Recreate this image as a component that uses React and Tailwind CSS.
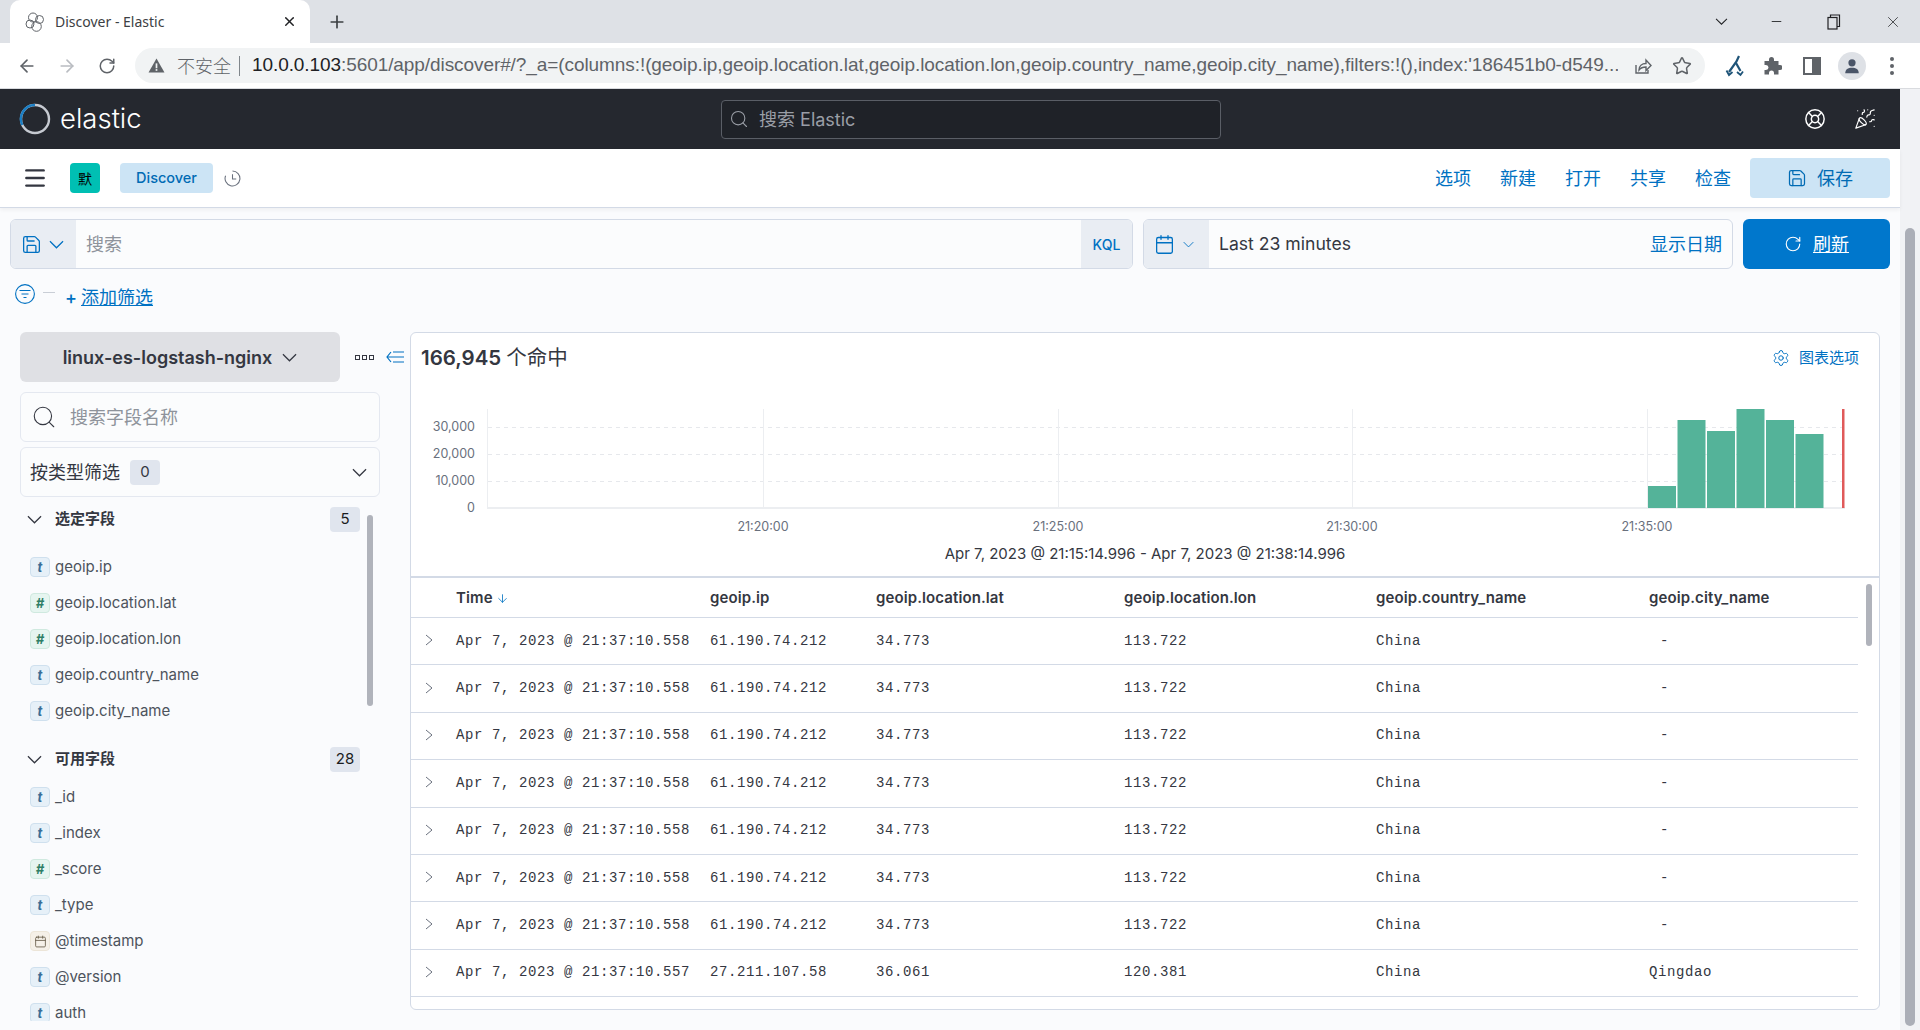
import { ArrowDown, ArrowLeft, ArrowRight, Calendar, LifeBuoy, Menu, Minus, PartyPopper, Plus, RotateCw, Save, Search, Settings, Star, X } from 'lucide-react';

const timeCol = 'Apr 7, 2023 @ 21:37:10.558';
const rows = [
  { time: timeCol, ip: '61.190.74.212', lat: '34.773', lon: '113.722', country: 'China', city: '-' },
  { time: timeCol, ip: '61.190.74.212', lat: '34.773', lon: '113.722', country: 'China', city: '-' },
  { time: timeCol, ip: '61.190.74.212', lat: '34.773', lon: '113.722', country: 'China', city: '-' },
  { time: timeCol, ip: '61.190.74.212', lat: '34.773', lon: '113.722', country: 'China', city: '-' },
  { time: timeCol, ip: '61.190.74.212', lat: '34.773', lon: '113.722', country: 'China', city: '-' },
  { time: timeCol, ip: '61.190.74.212', lat: '34.773', lon: '113.722', country: 'China', city: '-' },
  { time: timeCol, ip: '61.190.74.212', lat: '34.773', lon: '113.722', country: 'China', city: '-' },
  { time: 'Apr 7, 2023 @ 21:37:10.557', ip: '27.211.107.58', lat: '36.061', lon: '120.381', country: 'China', city: 'Qingdao' },
];

const selectedFields = [
  ['t', 'geoip.ip'],
  ['#', 'geoip.location.lat'],
  ['#', 'geoip.location.lon'],
  ['t', 'geoip.country_name'],
  ['t', 'geoip.city_name'],
];

const availableFields = [
  ['t', '_id'],
  ['t', '_index'],
  ['#', '_score'],
  ['t', '_type'],
  ['d', '@timestamp'],
  ['t', '@version'],
  ['t', 'auth'],
];

const bars = [
  { x: 1648, y: 486, w: 28 },
  { x: 1677.5, y: 420, w: 28 },
  { x: 1707, y: 431, w: 28 },
  { x: 1736.5, y: 409, w: 28 },
  { x: 1766, y: 420, w: 28 },
  { x: 1795.5, y: 434, w: 28 },
];

// thin EUI style chevron, wider than the lucide one
const Chev = ({ className }) => (
  <svg viewBox="0 0 16 9" className={className} fill="none" stroke="currentColor" strokeWidth="1.3">
    <path d="M1 1 8 8 15 1" />
  </svg>
);

const FieldIcon = ({ type }) => {
  if (type === 'd') {
    return (
      <span className="w-5 h-5 shrink-0 rounded-[4px] bg-[#f5f0e8] border border-[#ece5d8] flex items-center justify-center text-[#6b5f4d]">
        <Calendar size={13} strokeWidth={1.6} />
      </span>
    );
  }
  if (type === '#') {
    return (
      <span className="w-5 h-5 shrink-0 rounded-[4px] bg-[#e6f5f0] border border-[#cfe9df] flex items-center justify-center text-[#2f7f66] text-[13px] font-bold italic leading-none">#</span>
    );
  }
  return (
    <span className="w-5 h-5 shrink-0 rounded-[4px] bg-[#e6f0f8] border border-[#cfe0ee] flex items-center justify-center text-[#3a6e97] text-[13px] font-bold italic leading-none">t</span>
  );
};

const FieldRow = ({ type, name }) => (
  <div className="h-9 flex items-center gap-[5px] pl-[10px] shrink-0">
    <FieldIcon type={type} />
    <span className="text-[15px] text-[#4d535c]">{name}</span>
  </div>
);

const SectionHead = ({ title, count }) => (
  <div className="h-[26px] flex items-center pl-[7px] w-[340px] shrink-0">
    <Chev className="w-[15px] h-[9px] text-[#343741]" />
    <span className="ml-[13px] text-[15px] font-semibold text-[#343741] flex-1">{title}</span>
    <span className="w-[30px] h-[25px] rounded-[4px] bg-[#e0e5ee] flex items-center justify-center text-[15px] text-[#1a1c21]">{count}</span>
  </div>
);

const TabStrip = () => (
  <div className="h-[43px] bg-[#dee1e6] flex items-end shrink-0">
    <div className="ml-[10px] w-[300px] h-[43px] bg-white rounded-t-[10px] flex items-center pl-[15px] pr-[13px]">
      <svg viewBox="0 0 20 20" className="w-5 h-5 shrink-0" fill="none" stroke="#5f6368" strokeWidth="1">
        <circle cx="8" cy="5.5" r="4.5" />
        <circle cx="14.5" cy="7.5" r="4" />
        <circle cx="5" cy="12" r="4" />
        <circle cx="11.5" cy="14.5" r="4.8" />
      </svg>
      <span className="ml-[10px] flex-1 font-['Noto_Sans'] text-[14px] text-[#3c4043]">Discover - Elastic</span>
      <X size={15} strokeWidth={2.4} className="text-[#202124]" />
    </div>
    <div className="h-[43px] w-[54px] flex items-center justify-center">
      <Plus size={20} strokeWidth={2} className="text-[#3c4043]" />
    </div>
    <div className="flex-1" />
    <div className="h-[43px] flex items-center text-[#202124]">
      <Chev className="w-[13px] h-[7px]" />
      <Minus size={15} strokeWidth={1.4} className="ml-[41px]" />
      <svg viewBox="0 0 14 16" className="w-[14px] h-[16px] ml-[43px]" fill="none" stroke="currentColor" strokeWidth="1.2">
        <rect x="1" y="3.5" width="9" height="11.5" />
        <path d="M3.5 3.5V1H12.5V12.5H10" />
      </svg>
      <X size={18} strokeWidth={1} className="ml-[43px] mr-[18px]" />
    </div>
  </div>
);

const Toolbar = () => (
  <div className="h-[46px] bg-white border-b border-[#d9dbdf] flex items-center shrink-0">
    <div className="w-[135px] flex items-center pl-[17px] text-[#5f6368]">
      <ArrowLeft size={20} strokeWidth={2} />
      <ArrowRight size={20} strokeWidth={2} className="ml-[20px] text-[#b9bcc1]" />
      <RotateCw size={18} strokeWidth={2} className="ml-[21px]" />
    </div>
    <div className="w-[1570px] h-[35px] rounded-full bg-[#f1f3f4] flex items-center pl-[13px]">
      <svg viewBox="0 0 16 16" className="w-[17px] h-[17px] shrink-0" fill="#5f6368">
        <path d="M8 1.5 15.5 14.5H.5Z" />
        <rect x="7.2" y="6" width="1.6" height="4.6" fill="#f1f3f4" />
        <rect x="7.2" y="11.4" width="1.6" height="1.6" fill="#f1f3f4" />
      </svg>
      <span className="ml-[12px] text-[18px] text-[#5f6368] font-['Noto_Sans_CJK_SC'] font-light">不安全</span>
      <span className="ml-[8px] w-px h-[20px] bg-[#80868b]" />
      <span className="ml-[12px] w-[1366px] font-['Liberation_Sans'] text-[19px] tracking-[-0.08px] text-[#5f6368] whitespace-nowrap overflow-hidden">
        <span className="text-[#202124]">10.0.0.103</span>:5601/app/discover#/?_a=(columns:!(geoip.ip,geoip.location.lat,geoip.location.lon,geoip.country_name,geoip.city_name),filters:!(),index:'186451b0-d549...
      </span>
      <svg viewBox="0 0 20 20" className="w-[20px] h-[20px] ml-[15px] shrink-0" fill="none" stroke="#5f6368" strokeWidth="1.4">
        <path d="M3 9v8h12v-3" />
        <path d="M6 14c0-4 3-6.5 7-6.5V4l5 5.5-5 5V11c-3 0-5.500 1-7 3Z" />
      </svg>
      <Star size={20} strokeWidth={1.8} className="ml-[19px] text-[#5f6368]" />
    </div>
    <svg viewBox="0 0 20 22" className="w-[20px] h-[22px] ml-[20px] shrink-0" fill="none" stroke="#1f5478" strokeWidth="2.2">
      <path d="M14 1 11.500 6.500 4 17" />
      <path d="M11 8l4.500 8" />
      <path d="M1.500 15.500 4 20l3.500-3M12 17l3.500 3 2.500-3.500" strokeWidth="1.8" />
    </svg>
    <svg viewBox="0 0 20 20" className="w-[20px] h-[20px] ml-[17px] shrink-0" fill="#5f6368">
      <path d="M7 3.500a2.500 2.500 0 0 1 5 0V5h4.500v4H18a2.500 2.500 0 0 1 0 5h-1.500v4.500H12V17a2.500 2.500 0 0 0-5 0v1.500H2.500V14H4a2.500 2.500 0 0 0 0-5H2.500V5H7Z" />
    </svg>
    <span className="w-[18px] h-[18px] ml-[21px] shrink-0 border-[2.5px] border-[#5f6368] flex justify-end">
      <span className="w-[7px] h-full bg-[#5f6368]" />
    </span>
    <span className="w-[28px] h-[28px] ml-[17px] rounded-full bg-[#dee1e6] flex items-center justify-center shrink-0">
      <svg viewBox="0 0 20 20" className="w-[18px] h-[18px]" fill="#4a5568">
        <circle cx="10" cy="6.500" r="4" />
        <path d="M2.500 18c0-4 3-6 7.500-6s7.500 2 7.500 6Z" />
      </svg>
    </span>
    <span className="ml-[24px] flex flex-col gap-[3px]">
      <span className="w-1 h-1 rounded-full bg-[#5f6368]" />
      <span className="w-1 h-1 rounded-full bg-[#5f6368]" />
      <span className="w-1 h-1 rounded-full bg-[#5f6368]" />
    </span>
  </div>
);

const GlobalHeader = () => (
  <div className="h-[60px] bg-[#25282f] flex items-center shrink-0">
    <svg viewBox="0 0 32 32" className="w-[32px] h-[32px] ml-[19px] shrink-0" fill="none" strokeWidth="2.4">
      <circle cx="16" cy="16" r="14" stroke="#c6cad1" />
      <path d="M3.300 22A14 14 0 0 1 16 2" stroke="#1b7ec4" />
    </svg>
    <span className="ml-[9px] w-[83px] text-[27.5px] leading-none font-light text-white">elastic</span>
    <div className="ml-[578px] w-[500px] h-[39px] rounded-[4px] border border-[#5a5e66] bg-[#1f2228] flex items-center pl-[7px] text-[#9a9ea6]">
      <Search size={20} strokeWidth={1.3} />
      <span className="ml-[10px] text-[18px]">搜索 Elastic</span>
    </div>
    <div className="flex-1" />
    <LifeBuoy size={22} strokeWidth={1.6} className="text-white" />
    <PartyPopper size={22} strokeWidth={1.3} className="text-white ml-[28px] mr-[24px]" />
  </div>
);

const SubHeader = () => (
  <div className="h-[59px] bg-white border-b border-[#d3dae6] shadow-[0_2px_4px_rgba(0,0,0,0.05)] flex items-center shrink-0 relative">
    <Menu size={26} strokeWidth={2.2} className="ml-[22px] text-[#343741]" />
    <span className="ml-[22px] w-[30px] h-[30px] rounded-[4px] bg-[#00bfb3] flex items-center justify-center text-[14px] text-black">默</span>
    <span className="ml-[20px] w-[93px] h-[30px] rounded-[4px] bg-[#cce4f5] flex items-center justify-center text-[14.5px] font-medium text-[#006bb4]">Discover</span>
    <svg viewBox="0 0 16 16" className="w-[17px] h-[17px] ml-[11px]" fill="none" stroke="#69707d" strokeWidth="1">
      <path d="M8 1a7 7 0 1 1-6.500 4.400" />
      <path d="M8 4v4.500h3.500" />
    </svg>
    <div className="flex-1" />
    <div className="flex items-center gap-[29px] text-[18px] text-[#0071c2]">
      <span>选项</span>
      <span>新建</span>
      <span>打开</span>
      <span>共享</span>
      <span>检查</span>
    </div>
    <div className="ml-[19px] mr-[10px] w-[140px] h-[40px] rounded-[4px] bg-[#cce4f5] flex items-center pl-[37px] text-[18px] text-[#006bb4]">
      <Save size={20} strokeWidth={1.5} />
      <span className="ml-[10px]">保存</span>
    </div>
  </div>
);

const QueryBar = () => (
  <div className="h-[50px] mt-[11px] mx-[10px] flex shrink-0">
    <div className="w-[1123px] rounded-[6px] border border-[#d3dae6] bg-[#fbfcfd] flex overflow-hidden">
      <div className="w-[65px] bg-[#e9edf3] flex items-center pl-[10px] text-[#0071c2] gap-[7px]">
        <Save size={21} strokeWidth={1.5} />
        <Chev className="w-[15px] h-[9px]" />
      </div>
      <div className="flex-1 flex items-center pl-[10px] text-[18px] text-[#8e939b]">搜索</div>
      <div className="w-[51px] bg-[#e9edf3] flex items-center justify-center text-[14px] font-medium text-[#0071c2]">KQL</div>
    </div>
    <div className="ml-[10px] w-[590px] rounded-[6px] border border-[#d3dae6] bg-[#fbfcfd] flex overflow-hidden">
      <div className="w-[65px] bg-[#e9edf3] flex items-center pl-[10px] text-[#0071c2] gap-[8px]">
        <Calendar size={21} strokeWidth={1.5} />
        <Chev className="w-[11px] h-[7px]" />
      </div>
      <div className="flex-1 flex items-center pl-[10px] text-[17.6px] text-[#343741]">Last 23 minutes</div>
      <div className="flex items-center pr-[10px] text-[18px] text-[#0071c2]">显示日期</div>
    </div>
    <div className="ml-[10px] w-[147px] rounded-[6px] bg-[#0077cc] flex items-center pl-[41px] text-white">
      <RotateCw size={18} strokeWidth={1.5} />
      <span className="ml-[11px] text-[18px] underline">刷新</span>
    </div>
  </div>
);

const FilterBar = () => (
  <div className="h-[63px] pl-[15px] flex items-start pt-[15px] shrink-0">
    <svg viewBox="0 0 20 20" className="w-5 h-5 shrink-0" fill="none" stroke="#0071c2" strokeWidth="1.100">
      <circle cx="10" cy="10" r="9.400" />
      <path d="M4.500 6.500h11M6.500 10h7M8.500 13.500h3" />
    </svg>
    <span className="ml-[8px] mt-[8px] w-[12px] h-px bg-[#c9ced6]" />
    <span className="ml-[10px] mt-[1px] text-[18px] leading-[26px] text-[#0071c2]"><span className="font-medium">+</span><span className="ml-[4px] underline">添加筛选</span></span>
  </div>
);

const Sidebar = () => (
  <div className="w-[390px] h-[689px] shrink-0 overflow-hidden relative">
    <div className="flex items-center">
      <div className="w-[320px] h-[50px] rounded-[6px] bg-[#dfe0e4] flex items-center justify-center gap-[10px] text-[18px] font-semibold text-[#343741]">
        <span>linux-es-logstash-nginx</span>
        <Chev className="w-[15px] h-[9px]" />
      </div>
      <span className="ml-[15px] flex gap-[2px]">
        <span className="w-[5px] h-[5px] border border-[#343741]" />
        <span className="w-[5px] h-[5px] border border-[#343741]" />
        <span className="w-[5px] h-[5px] border border-[#343741]" />
      </span>
      <svg viewBox="0 0 18 14" className="w-[18px] h-[14px] ml-[12px]" fill="none" stroke="#0071c2" strokeWidth="1.200">
        <path d="M5 2 1 7l4 5M1 7h17M7 2h11M7 12h11" />
      </svg>
    </div>
    <div className="mt-[10px] w-[360px] h-[50px] rounded-[6px] border border-[#e4e8f0] bg-[#fbfcfd] flex items-center pl-[10px] text-[18px] text-[#8e939b]">
      <Search size={26} strokeWidth={1} className="text-[#343741]" />
      <span className="ml-[13px]">搜索字段名称</span>
    </div>
    <div className="mt-[5px] w-[360px] h-[50px] rounded-[6px] border border-[#e4e8f0] bg-[#fbfcfd] flex items-center pl-[9px] pr-[12px] text-[18px] text-[#343741]">
      <span>按类型筛选</span>
      <span className="ml-[10px] w-[30px] h-[25px] rounded-[4px] bg-[#e0e5ee] flex items-center justify-center text-[15px]">0</span>
      <span className="flex-1" />
      <Chev className="w-[15px] h-[9px]" />
    </div>
    <div className="mt-[9px]">
      <SectionHead title="选定字段" count="5" />
    </div>
    <div className="mt-[17px] flex flex-col">
      {selectedFields.map(([type, name]) => (
        <FieldRow key={name} type={type} name={name} />
      ))}
    </div>
    <div className="mt-[17px]">
      <SectionHead title="可用字段" count="28" />
    </div>
    <div className="mt-[7px] flex flex-col">
      {availableFields.map(([type, name]) => (
        <FieldRow key={name} type={type} name={name} />
      ))}
    </div>
    <div className="absolute left-[347px] top-[183px] w-[6px] h-[191px] rounded-full bg-[#b0b3bb]" />
  </div>
);

const Chart = () => (
  <svg viewBox="411 395 1468 145" className="w-[1468px] h-[145px] block">
    <g stroke="#e6e8ec" strokeWidth="1" strokeDasharray="4 4">
      <line x1="488" x2="1845" y1="427.500" y2="427.500" />
      <line x1="488" x2="1845" y1="454.500" y2="454.500" />
      <line x1="488" x2="1845" y1="481.500" y2="481.500" />
    </g>
    <g stroke="#eceef1" strokeWidth="1">
      <line x1="487.500" x2="487.500" y1="409" y2="508" />
      <line x1="763.500" x2="763.500" y1="409" y2="508" />
      <line x1="1058.500" x2="1058.500" y1="409" y2="508" />
      <line x1="1352.500" x2="1352.500" y1="409" y2="508" />
      <line x1="1647.500" x2="1647.500" y1="409" y2="508" />
      <line x1="487" x2="1845" y1="508" y2="508" strokeWidth="2" />
    </g>
    {bars.map((b) => (
      <rect key={b.x} x={b.x} y={b.y} width={b.w} height={508 - b.y} fill="#54b399" />
    ))}
    <rect x="1842" y="409" width="2.500" height="99" fill="#e05a5a" />
    <g fontFamily="Inter" fontSize="12.500" fill="#69707d" textAnchor="end">
      <text x="475" y="431">30,000</text>
      <text x="475" y="458">20,000</text>
      <text x="475" y="485">10,000</text>
      <text x="475" y="512">0</text>
    </g>
    <g fontFamily="Inter" fontSize="12.500" fill="#69707d" textAnchor="middle">
      <text x="763" y="531">21:20:00</text>
      <text x="1058" y="531">21:25:00</text>
      <text x="1352" y="531">21:30:00</text>
      <text x="1647" y="531">21:35:00</text>
    </g>
  </svg>
);

const ResultsPanel = () => (
  <div className="w-[1470px] h-[678px] rounded-[6px] border border-[#d3dae6] bg-white flex flex-col relative overflow-hidden">
    <div className="h-[62px] pb-[12px] pl-[10px] pr-[20px] flex items-center">
      <span className="text-[20.5px] font-semibold text-[#343741]">166,945</span>
      <span className="ml-[5px] text-[20.5px] text-[#343741]">个命中</span>
      <span className="flex-1" />
      <Settings size={18} strokeWidth={1.3} className="text-[#0071c2]" />
      <span className="ml-[9px] text-[15px] text-[#0071c2]">图表选项</span>
    </div>
    <Chart />
    <div className="h-[38px] pb-[8px] flex items-center justify-center text-[15px] text-[#343741] border-b-2 border-[#d3dae6]">
      Apr 7, 2023 @ 21:15:14.996 - Apr 7, 2023 @ 21:38:14.996
    </div>
    <div className="mr-[21px]">
      <div className="h-[40px] pt-[1px] flex items-center border-b border-[#d3dae6] text-[15px] tracking-[0.1px] font-semibold text-[#343741]">
        <span className="w-[45px]" />
        <span className="w-[254px] flex items-center gap-[3px]">Time <ArrowDown size={13} strokeWidth={1.5} className="text-[#0071c2]" /></span>
        <span className="w-[166px]">geoip.ip</span>
        <span className="w-[248px]">geoip.location.lat</span>
        <span className="w-[252px]">geoip.location.lon</span>
        <span className="w-[273px]">geoip.country_name</span>
        <span>geoip.city_name</span>
      </div>
      {rows.map((r, i) => (
        <div key={i} className="h-[47.375px] flex items-center border-b border-[#d3dae6] font-['Liberation_Mono'] text-[14px] tracking-[0.6px] text-[#343741] whitespace-nowrap">
          <span className="w-[45px] pl-[14px] text-[#69707d]">
            <svg viewBox="0 0 8 12" className="w-[8px] h-[12px] -mt-[2px]" fill="none" stroke="currentColor" strokeWidth="1">
              <path d="M1 1 7 6 1 11" />
            </svg>
          </span>
          <span className="w-[254px]">{r.time}</span>
          <span className="w-[166px]">{r.ip}</span>
          <span className="w-[248px]">{r.lat}</span>
          <span className="w-[252px]">{r.lon}</span>
          <span className="w-[273px]">{r.country}</span>
          <span className={r.city === '-' ? 'pl-[11px]' : ''}>{r.city}</span>
        </div>
      ))}
    </div>
    <div className="absolute left-[1455px] top-[251px] w-[6px] h-[62px] rounded-full bg-[#b0b3bb]" />
  </div>
);

export default function App() {
  return (
    <div className="w-[1920px] h-[1030px] overflow-hidden flex flex-col bg-white font-[Inter,'Noto_Sans_CJK_SC',sans-serif]">
      <TabStrip />
      <Toolbar />
      <div className="flex-1 flex min-h-0">
        <div className="w-[1900px] flex flex-col bg-[#fafbfd]">
          <GlobalHeader />
          <SubHeader />
          <QueryBar />
          <FilterBar />
          <div className="flex pl-[20px]">
            <Sidebar />
            <ResultsPanel />
          </div>
        </div>
        <div className="w-[20px] bg-[#f1f2f5] pt-[139px] flex justify-center">
          <div className="w-[10px] h-[798px] rounded-full bg-[#abaeb7]" />
        </div>
      </div>
    </div>
  );
}
